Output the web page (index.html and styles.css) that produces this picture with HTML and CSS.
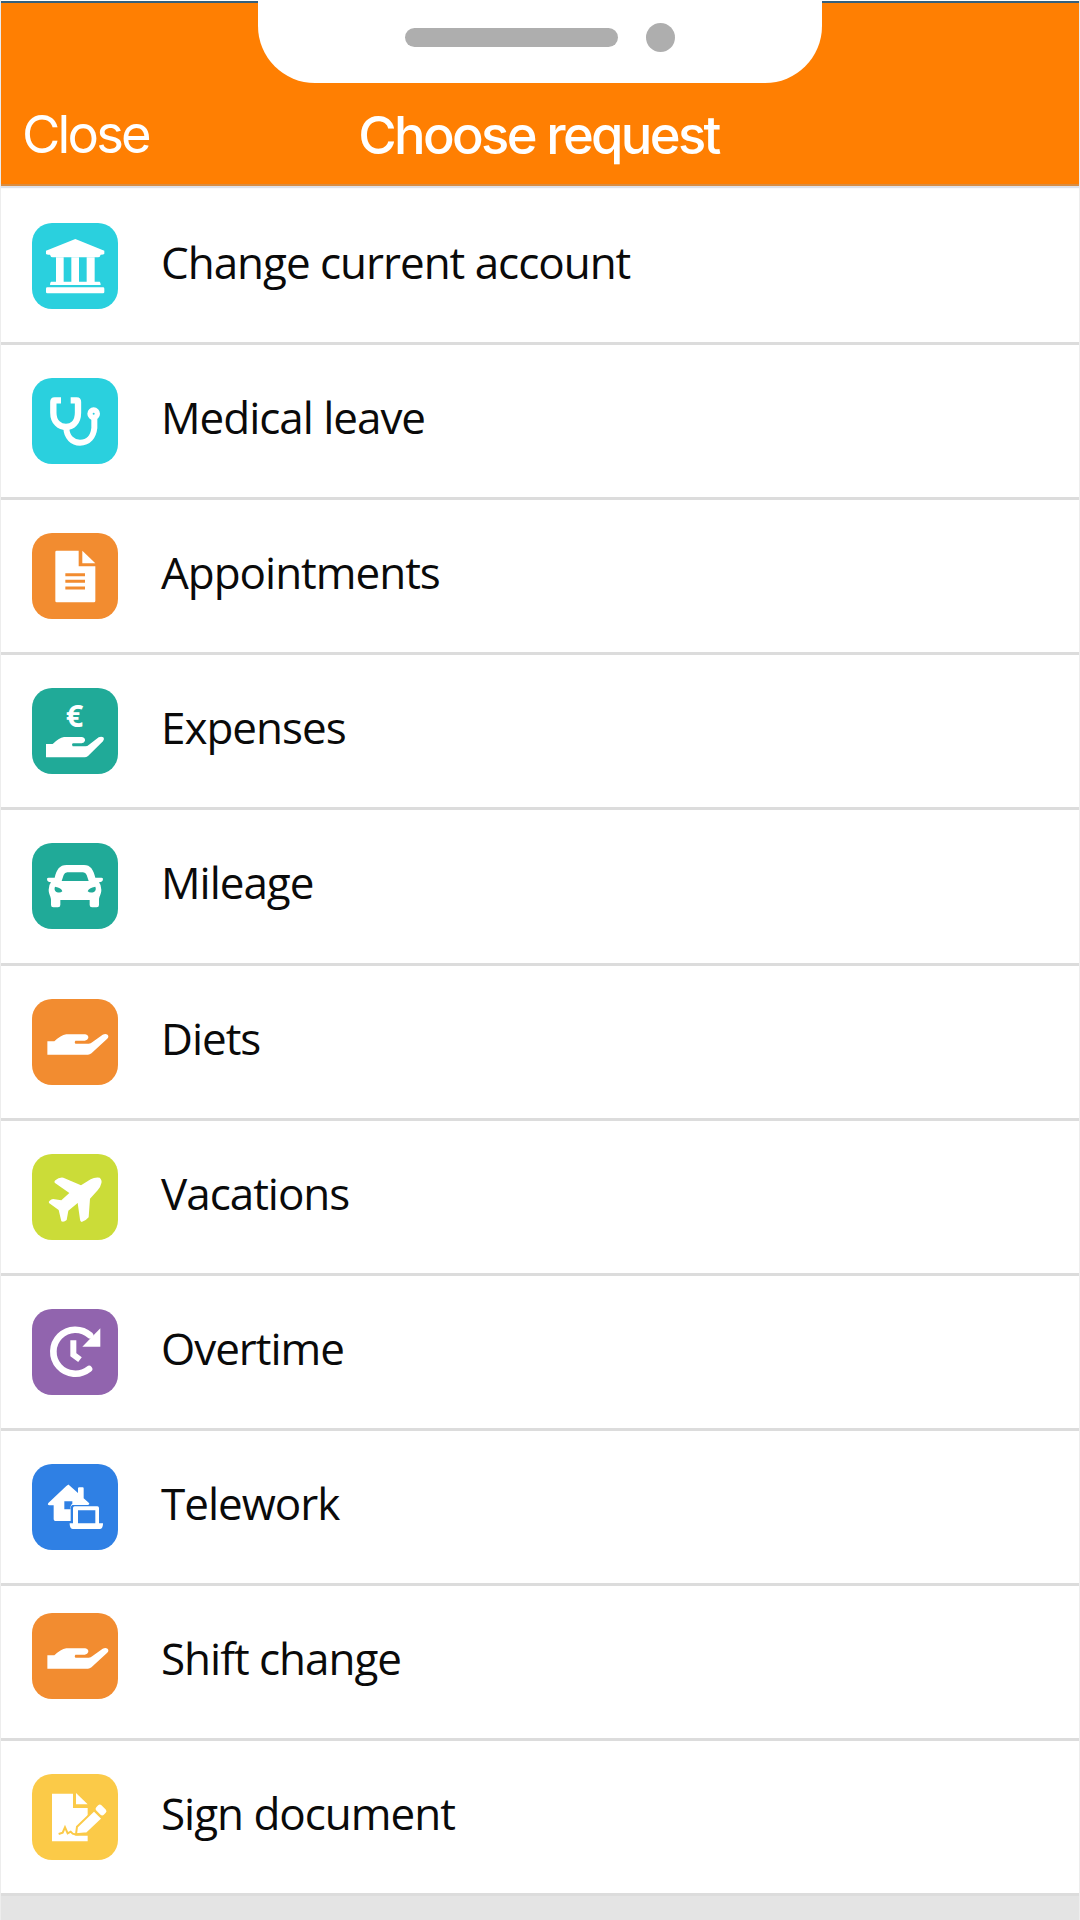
FILE: index.html
```
<!DOCTYPE html>
<html lang="en">
<head>
  <meta charset="UTF-8" />
  <meta name="viewport" content="width=device-width, initial-scale=1.0"/>
  <title>Choose request</title>
  <link rel="stylesheet" href="styles.css">
</head>
<body>
  <div class="screen">
    <header class="header">
      <div class="notch">
        <span class="speaker"></span>
        <span class="camera"></span>
      </div>
      <nav class="navbar">
        <a class="close">Close</a>
        <h1>Choose request</h1>
      </nav>
    </header>

    <ul class="requests">
      <li>
        <span class="icon cyan">
          <svg viewBox="0 0 258 258">
            <path d="M130 48 L217 83 V92 Q216 95 206 95 Q204 103 198 103 H62 Q56 103 54 95 Q43 95 42 92 V83 Z"/>
            <path d="M72 103 H95 V176 H118 V103 H141 V176 H164 V103 H188 V176 H203 Q206 178 206 186 H54 Q54 178 57 176 H72 Z"/>
            <rect x="42" y="193" width="175" height="18" rx="4"/>
          </svg>
        </span>
        <span class="label">Change current account</span>
      </li>
      <li>
        <span class="icon cyan">
          <svg viewBox="0 0 258 258">
            <g class="line" stroke-width="19">
              <path d="M87 67 H68 Q64 67 64 72 V104 C64 134 84 147 102 147 C120 147 138 134 138 104 V72 Q138 67 134 67 H116"/>
              <path d="M103 150 C104 178 122 194 144 194 C170 194 184 176 187 150 V122" stroke-width="18"/>
              <circle cx="185" cy="107" r="11" stroke-width="16"/>
            </g>
          </svg>
        </span>
        <span class="label">Medical leave</span>
      </li>
      <li>
        <span class="icon orange">
          <svg viewBox="0 0 258 258">
            <path d="M74 53 H140 V100 H190 V204 Q190 208 186 208 H74 Q70 208 70 204 V57 Q70 53 74 53 Z"/>
            <path d="M151 53 L190 91 H151 Z"/>
            <path class="cut" d="M100 125 H159 M100 145 H159 M100 165 H159" stroke-width="9"/>
          </svg>
        </span>
        <span class="label">Appointments</span>
      </li>
      <li>
        <span class="icon teal">
          <svg viewBox="0 0 258 258">
            <text class="euro" x="101" y="117">€</text>
            <path d="M42 168 H62 Q80 150 96 147 H150 Q160 149 159 158 Q157 165 149 166 H122 Q118 170 122 175 H160 Q166 175 171 170 L200 148 Q208 144 214 148 Q219 154 213 160 L168 204 Q163 208 158 208 H42 Z"/>
          </svg>
        </span>
        <span class="label">Expenses</span>
      </li>
      <li>
        <span class="icon teal">
          <svg viewBox="0 0 258 258">
            <path fill-rule="evenodd" d="M104 66 H156 C176 66 184 80 190 104 H208 Q213 104 213 108 C213 115 208 117 201 118 Q208 126 208 140 C208 154 201 160 201 170 V186 Q201 193 194 193 H180 Q173 193 173 186 V171 H85 V186 Q85 193 78 193 H64 Q57 193 57 186 V170 C57 160 50 154 50 140 Q50 126 57 118 C50 117 45 115 45 108 Q45 104 50 104 H68 C74 80 82 66 104 66 Z M106 88 Q98 88 95 96 L89 114 H170 L164 96 Q161 88 153 88 Z M69 131 Q89 134 91 145 Q85 151 73 147 Q65 141 69 131 Z M190 131 Q170 134 167 145 Q174 151 186 147 Q194 141 190 131 Z"/>
          </svg>
        </span>
        <span class="label">Mileage</span>
      </li>
      <li>
        <span class="icon orange">
          <svg viewBox="0 0 258 258">
            <path transform="translate(2 -41) scale(1.05 1)" d="M42 168 H62 Q80 150 96 147 H150 Q160 149 159 158 Q157 165 149 166 H122 Q118 170 122 175 H160 Q166 175 171 170 L200 148 Q208 144 214 148 Q219 154 213 160 L168 204 Q163 208 158 208 H42 Z"/>
          </svg>
        </span>
        <span class="label">Diets</span>
      </li>
      <li>
        <span class="icon lime">
          <svg viewBox="0 0 258 258">
            <path d="M147 94 L176 76 Q188 69 203 71 Q211 79 208 88 Q206 99 197 109 L174 134 L170 190 Q160 202 149 204 Q144 202 144 196 L137 147 L109 170 L104 198 Q96 205 88 202 L80 168 L51 147 Q49 143 53 140 Q60 133 68 136 L88 139 L112 117 L68 86 Q66 82 70 79 Q81 69 94 71 Z"/>
          </svg>
        </span>
        <span class="label">Vacations</span>
      </li>
      <li>
        <span class="icon purple">
          <svg viewBox="0 0 258 258">
            <g class="line" stroke-width="20">
              <path d="M171 180 A66 66 0 1 1 174 79" stroke-linecap="round"/>
              <path d="M124 94 V137 L144 152" stroke-width="18"/>
            </g>
            <path d="M205 58 V113 H151 Z"/>
          </svg>
        </span>
        <span class="label">Overtime</span>
      </li>
      <li>
        <span class="icon blue">
          <svg viewBox="0 0 258 258">
            <path fill-rule="evenodd" d="M110 62 L138 87 V73 Q138 70 142 70 H152 Q155 70 155 73 V103 L171 117 Q174 122 167 123 H121 Q116 125 116 134 V171 H70 Q65 171 65 166 V124 H52 Q45 123 49 117 L103 66 Q110 60 110 62 Z M97 112 V136 H115 Q115 122 121 119 V112 Z"/>
            <path fill-rule="evenodd" d="M128 127 H196 Q201 127 201 132 V178 H213 Q213 195 203 195 H123 Q113 195 113 178 H123 V132 Q123 127 128 127 Z M138 139 V178 H190 V139 Z"/>
          </svg>
        </span>
        <span class="label">Telework</span>
      </li>
      <li class="raised">
        <span class="icon orange">
          <svg viewBox="0 0 258 258">
            <path transform="translate(2 -41) scale(1.05 1)" d="M42 168 H62 Q80 150 96 147 H150 Q160 149 159 158 Q157 165 149 166 H122 Q118 170 122 175 H160 Q166 175 171 170 L200 148 Q208 144 214 148 Q219 154 213 160 L168 204 Q163 208 158 208 H42 Z"/>
          </svg>
        </span>
        <span class="label">Shift change</span>
      </li>
      <li>
        <span class="icon yellow">
          <svg viewBox="0 0 258 258">
            <path d="M60 59 H123 V102 H167 V202 H60 Z"/>
            <path d="M132 57 L167 91 H132 Z"/>
            <path class="cut" d="M80 180 L92 176 L99 160 L107 178 L116 173 L122 179 L134 182 H169" stroke-width="6"/>
            <path class="outlined" d="M186 109 L211 134 L165 178 L132 181 L135 158 Z"/>
            <rect x="196" y="92" width="22" height="32" rx="7" transform="rotate(-45 207 108)"/>
          </svg>
        </span>
        <span class="label">Sign document</span>
      </li>
    </ul>
    <div class="bottom"></div>
  </div>
</body>
</html>
```

FILE: styles.css
```
* {
  box-sizing: border-box;
}

body {
  margin: 0;
  background: #fff;
  color: #0a0a0a;
  font-family: "Open Sans", "Noto Sans", sans-serif;
}

.screen {
  display: flex;
  flex-direction: column;
  width: 1080px;
  height: 1920px;
  padding: 1px 1px 0;
  background: linear-gradient(to right, #ededed 1px, #fff 1px, #fff 1079px, #ededed 1079px);
  overflow: hidden;
}

/* header */
.header {
  display: flex;
  flex-direction: column;
  align-items: center;
  flex: none;
  height: 185px;
  border-top: 2px solid #35607c;
  border-bottom: 2px solid #d98d42;
  background: #ff7f02;
  box-shadow: 0 2px 1px #dfe2ea;
}

.notch {
  display: flex;
  align-items: center;
  justify-content: center;
  gap: 28px;
  flex: none;
  width: 564px;
  height: 82px;
  margin-top: -2px;
  padding-bottom: 9px;
  border-radius: 0 0 57px 57px;
  background: #fff;
}

.speaker {
  width: 213px;
  height: 19px;
  border-radius: 10px;
  background: #aeaeae;
}

.camera {
  width: 29px;
  height: 29px;
  border-radius: 50%;
  background: #aeaeae;
}

.navbar {
  display: grid;
  grid-template-columns: 1fr auto 1fr;
  align-items: start;
  width: 100%;
  padding: 19px 24px 0 21px;
  color: #fff;
  font-family: Inter, "Liberation Sans", sans-serif;
  font-size: 52.5px;
  line-height: 66px;
}

.close {
  margin-top: -1px;
  letter-spacing: -2.8px;
}

h1 {
  margin: 0;
  font-size: 52.5px;
  font-weight: 500;
  letter-spacing: -2.65px;
}

/* request list */
.requests {
  flex: none;
  margin: 0;
  padding: 0;
  list-style: none;
}

.requests li {
  display: flex;
  align-items: center;
  gap: 43.5px;
  height: 155.14px;
  padding-left: 30.5px;
  border-bottom: 3px solid #dcdcdc;
}

.requests li:first-child {
  height: 159px;
  padding-top: 4px;
}

.requests li.raised .icon {
  margin-bottom: 12px;
}

.icon {
  flex: none;
  width: 86px;
  height: 86px;
  border-radius: 20px;
  background: currentColor;
}

.icon svg {
  display: block;
  width: 86px;
  height: 86px;
  fill: #fff;
}

.icon .line {
  fill: none;
  stroke: #fff;
}

.icon .cut {
  fill: none;
  stroke: currentColor;
}

.icon .outlined {
  stroke: currentColor;
  stroke-width: 6px;
}

.euro {
  font-size: 92px;
  font-weight: 700;
}

.cyan { color: #2ad0de; }
.orange { color: #f28c30; }
.teal { color: #20aa98; }
.lime { color: #cbdc38; }
.purple { color: #9164ae; }
.blue { color: #2f80e4; }
.yellow { color: #fbca48; }

.label {
  margin-bottom: 8px;
  font-size: 44px;
  line-height: 60px;
  letter-spacing: -1.02px;
  white-space: nowrap;
}

.bottom {
  flex: 1;
  background: #e4e4e4;
}
```
